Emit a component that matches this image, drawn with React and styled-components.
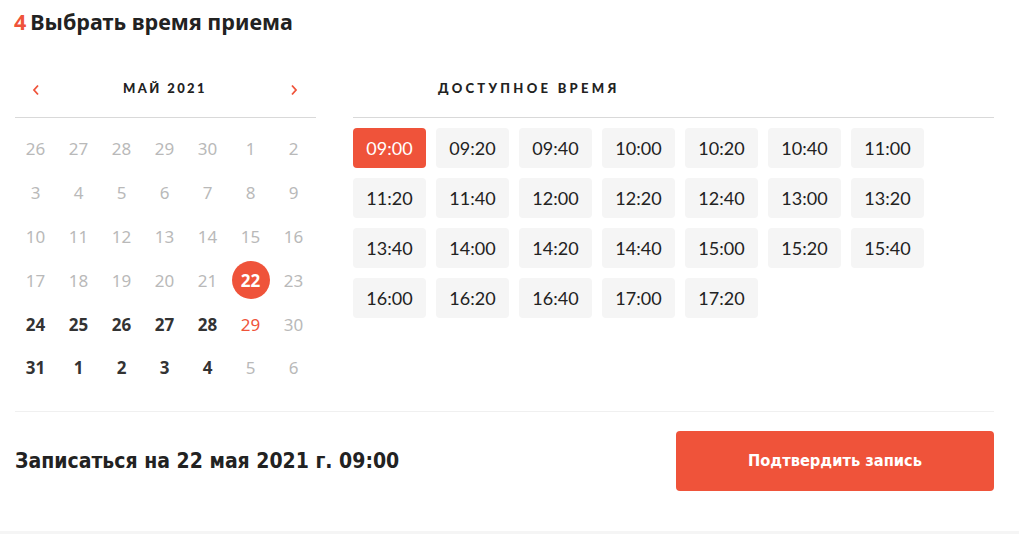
import React from "react";
import styled, { createGlobalStyle } from "styled-components";

const ACCENT = "#ef533a";

const Global = createGlobalStyle`
  html, body { margin: 0; padding: 0; background: #f5f5f5; }
  body { font-family: "PT Sans", "Noto Sans", sans-serif; color: #333; }
`;

const Page = styled.div`
  background: #fff;
  width: 1019px;
  height: 531px;
  box-sizing: border-box;
  padding: 7px 25px 0 15px;
`;

const Title = styled.h2`
  margin: 0;
  font-family: "Noto Sans", sans-serif;
  font-weight: 700;
  font-size: 21.5px;
  line-height: 30px;
  color: #222;
  span { color: ${ACCENT}; margin-right: 4px; margin-left: -1px; }
`;

const Main = styled.div`
  display: flex;
  gap: 37px;
  margin-top: 23px;
`;

const CalendarCol = styled.div`
  width: 301px;
  flex: none;
`;

const Header = styled.div`
  height: 57px;
  border-bottom: 1px solid #d9d9d9;
  display: flex;
  align-items: center;
  justify-content: ${(p) => (p.$left ? "flex-start" : "space-between")};
  padding: ${(p) => (p.$left ? "0 0 0 85px" : "0 18px 0 17px")};
  box-sizing: content-box;
`;

const HeadText = styled.div`
  font-family: "Lato", sans-serif;
  font-weight: 900;
  font-size: 13px;
  letter-spacing: ${(p) => p.$ls || "2.4px"};
  color: #222;
  margin-top: -2px;
`;

const Arrow = styled.button`
  border: none;
  background: none;
  padding: 0;
  width: 8px;
  height: 12px;
  display: flex;
  cursor: pointer;
  margin-top: 2px;
`;

const Days = styled.div`
  display: grid;
  grid-template-columns: repeat(7, 43px);
  grid-auto-rows: 43.8px;
  margin-top: 9px;
  margin-left: -1px;
`;

const Day = styled.div`
  display: flex;
  align-items: center;
  justify-content: center;
  font-family: "Noto Sans", sans-serif;
  font-size: 17px;
  font-weight: ${(p) => (p.$kind === "dark" || p.$kind === "sel" ? 700 : 400)};
  color: ${(p) =>
    p.$kind === "dark" ? "#333" : p.$kind === "red" ? ACCENT : p.$kind === "sel" ? "#fff" : "#b9b9b9"};
  span {
    width: 38px;
    height: 38px;
    border-radius: 50%;
    display: flex;
    align-items: center;
    justify-content: center;
    background: ${(p) => (p.$kind === "sel" ? ACCENT : "transparent")};
  }
`;

const TimeCol = styled.div`
  flex: 1;
`;

const Slots = styled.div`
  display: flex;
  flex-wrap: wrap;
  gap: 10px;
  margin-top: 10px;
  width: 571px;
`;

const Slot = styled.button`
  width: 73px;
  height: 40px;
  border: none;
  border-radius: 4px;
  background: ${(p) => (p.$active ? ACCENT : "#f5f5f5")};
  color: ${(p) => (p.$active ? "#fff" : "#222")};
  font-family: "Lato", sans-serif;
  font-size: 18px;
  padding: 0;
  cursor: pointer;
`;

const Footer = styled.div`
  border-top: 1px solid #f0f0f0;
  margin-top: 21px;
  padding-top: 19px;
  display: flex;
  align-items: center;
  justify-content: space-between;
`;

const Summary = styled.div`
  font-family: "DejaVu Sans Condensed", sans-serif;
  font-weight: 700;
  font-size: 21px;
  color: #222;
`;

const Confirm = styled.button`
  width: 318px;
  height: 60px;
  border: none;
  border-radius: 4px;
  background: ${ACCENT};
  color: #fff;
  font-family: "DejaVu Sans Condensed", sans-serif;
  font-weight: 700;
  font-size: 16.3px;
  cursor: pointer;
`;

const Chevron = ({ dir }) => (
  <svg width="8" height="12" viewBox="0 0 8 12">
    <path
      d={dir === "left" ? "M6 1.5 L2 6 L6 10.5" : "M2 1.5 L6 6 L2 10.5"}
      fill="none"
      stroke={ACCENT}
      strokeWidth="1.8"
    />
  </svg>
);

const days = [
  [26, "g"], [27, "g"], [28, "g"], [29, "g"], [30, "g"], [1, "g"], [2, "g"],
  [3, "g"], [4, "g"], [5, "g"], [6, "g"], [7, "g"], [8, "g"], [9, "g"],
  [10, "g"], [11, "g"], [12, "g"], [13, "g"], [14, "g"], [15, "g"], [16, "g"],
  [17, "g"], [18, "g"], [19, "g"], [20, "g"], [21, "g"], [22, "sel"], [23, "g"],
  [24, "dark"], [25, "dark"], [26, "dark"], [27, "dark"], [28, "dark"], [29, "red"], [30, "g"],
  [31, "dark"], [1, "dark"], [2, "dark"], [3, "dark"], [4, "dark"], [5, "g"], [6, "g"],
];

const times = [
  "09:00", "09:20", "09:40", "10:00", "10:20", "10:40", "11:00",
  "11:20", "11:40", "12:00", "12:20", "12:40", "13:00", "13:20",
  "13:40", "14:00", "14:20", "14:40", "15:00", "15:20", "15:40",
  "16:00", "16:20", "16:40", "17:00", "17:20",
];

export default function App() {
  return (
    <>
      <Global />
      <Page>
        <Title>
          <span>4</span>Выбрать время приема
        </Title>
        <Main>
          <CalendarCol>
            <Header>
              <Arrow aria-label="prev"><Chevron dir="left" /></Arrow>
              <HeadText>МАЙ 2021</HeadText>
              <Arrow aria-label="next"><Chevron dir="right" /></Arrow>
            </Header>
            <Days>
              {days.map(([d, k], i) => (
                <Day key={i} $kind={k}>
                  <span>{d}</span>
                </Day>
              ))}
            </Days>
          </CalendarCol>
          <TimeCol>
            <Header $left>
              <HeadText $ls="3.3px">ДОСТУПНОЕ ВРЕМЯ</HeadText>
            </Header>
            <Slots>
              {times.map((t, i) => (
                <Slot key={t} $active={i === 0}>{t}</Slot>
              ))}
            </Slots>
          </TimeCol>
        </Main>
        <Footer>
          <Summary>Записаться на 22 мая 2021 г. 09:00</Summary>
          <Confirm>Подтвердить запись</Confirm>
        </Footer>
      </Page>
    </>
  );
}
